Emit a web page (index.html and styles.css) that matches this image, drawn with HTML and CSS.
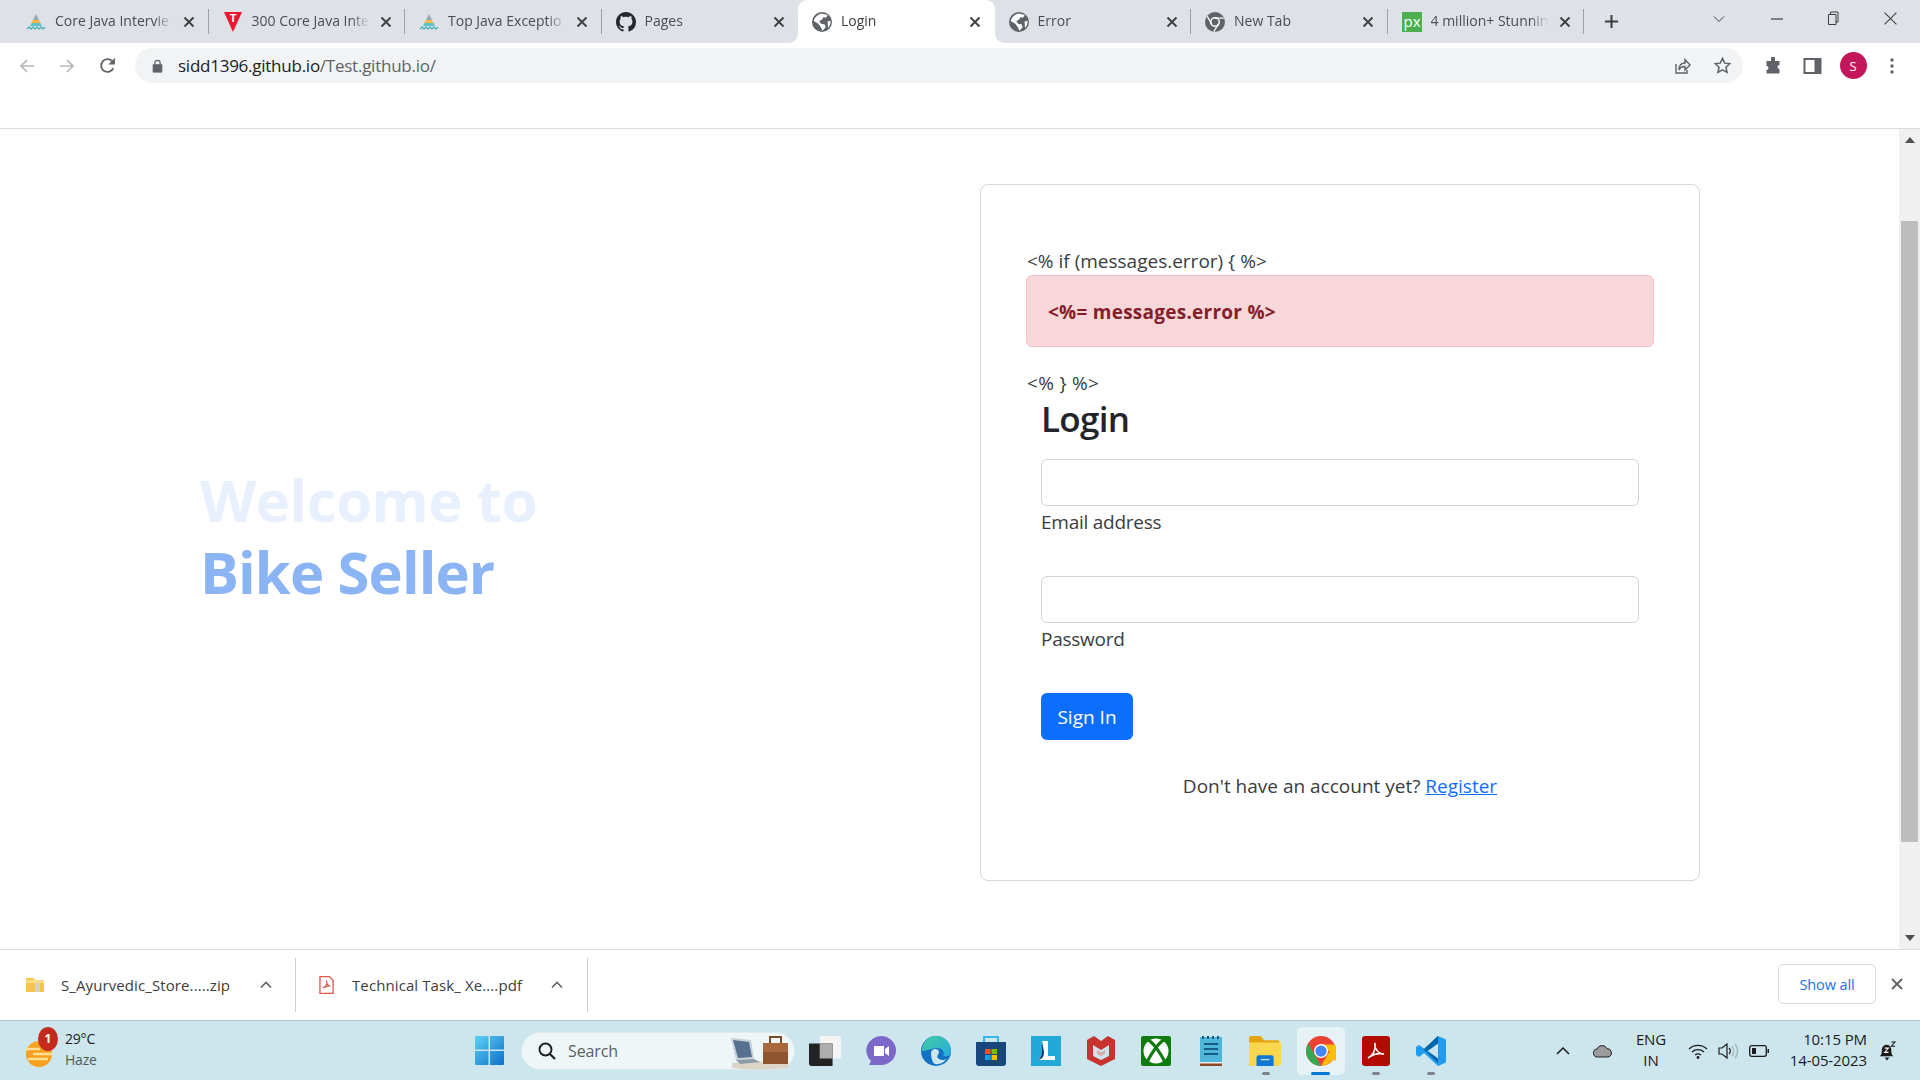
FILE: index.html
```html
<!DOCTYPE html>
<html lang="en">
<head>
<meta charset="utf-8">
<title>Login</title>
<link rel="stylesheet" href="styles.css">
</head>
<body>
<svg class="defs" width="0" height="0" aria-hidden="true">
  <defs>
    <symbol id="i-x" viewBox="0 0 12 12"><path d="M1.500 1.500l9 9M10.500 1.500l-9 9" fill="none" stroke="#3c4043" stroke-width="1.900"/></symbol>
    <symbol id="i-globe" viewBox="0 0 16 16"><circle cx="8" cy="8" r="8" fill="#5f6368"/><path d="M8 1.200c1.600.6 3 .2 4.600 1.600L11 4.600 9.400 4 8 6 5.800 7.400 7.600 9.600 10 9.800 11 12l-2.600 3L7 12 5 9.400 1.400 7.200C2 4.400 4.600 1.600 8 1.200zM12.500 7.500l2.300-.6c.3 2.400-.6 4.400-2 5.800z" fill="#fff"/></symbol>
    <symbol id="i-mount" viewBox="0 0 20 20"><path d="M10 2l3 6H7z" fill="#9aa7b0"/><path d="M7 8h3v3H5.500zM10 8h3l1.500 3H10z" fill="#f5b942"/><path d="M5.500 11H10v3H4zM10 11h4.500l1.500 3h-6z" fill="#5cc3c9"/><path d="M1 17l2-2 2 2 2-2 2 2 2-2 2 2 2-2 2 2 2-2" fill="none" stroke="#4db3bb" stroke-width="1.300"/></symbol>
  </defs>
</svg>
<div class="browser">
  <header class="tabstrip">
    <div class="tab"><svg class="fav" viewBox="0 0 20 20"><use href="#i-mount"/></svg><span class="tab-title">Core Java Intervie</span><svg class="tab-x" viewBox="0 0 12 12"><use href="#i-x"/></svg></div>
    <div class="tab"><svg class="fav" viewBox="0 0 20 20"><path d="M1 0h18l-9 20z" fill="#f0142f"/><text x="10" y="10" class="fav-t">T</text></svg><span class="tab-title">300 Core Java Inte</span><svg class="tab-x" viewBox="0 0 12 12"><use href="#i-x"/></svg></div>
    <div class="tab"><svg class="fav" viewBox="0 0 20 20"><use href="#i-mount"/></svg><span class="tab-title">Top Java Exceptio</span><svg class="tab-x" viewBox="0 0 12 12"><use href="#i-x"/></svg></div>
    <div class="tab tab-nosep"><svg class="fav" viewBox="0 0 16 16"><path fill="#24292f" d="M8 0C3.58 0 0 3.58 0 8c0 3.54 2.29 6.53 5.47 7.59.4.07.55-.17.55-.38 0-.19-.01-.82-.01-1.49-2.01.37-2.53-.49-2.69-.94-.09-.23-.48-.94-.82-1.13-.28-.15-.68-.52-.01-.53.63-.01 1.08.58 1.23.82.72 1.21 1.87.87 2.33.66.07-.52.28-.87.51-1.07-1.78-.2-3.64-.89-3.64-3.95 0-.87.31-1.59.82-2.15-.08-.2-.36-1.02.08-2.12 0 0 .67-.21 2.2.82.64-.18 1.32-.27 2-.27.68 0 1.36.09 2 .27 1.53-1.04 2.2-.82 2.2-.82.44 1.1.16 1.92.08 2.12.51.56.82 1.27.82 2.15 0 3.07-1.87 3.75-3.65 3.95.29.25.54.73.54 1.48 0 1.07-.01 1.93-.01 2.2 0 .21.15.46.55.38A8.013 8.013 0 0016 8c0-4.42-3.58-8-8-8z"/></svg><span class="tab-title">Pages</span><svg class="tab-x" viewBox="0 0 12 12"><use href="#i-x"/></svg></div>
    <div class="tab tab-active"><svg class="fav" viewBox="0 0 16 16"><use href="#i-globe"/></svg><span class="tab-title">Login</span><svg class="tab-x" viewBox="0 0 12 12"><use href="#i-x"/></svg></div>
    <div class="tab"><svg class="fav" viewBox="0 0 16 16"><use href="#i-globe"/></svg><span class="tab-title">Error</span><svg class="tab-x" viewBox="0 0 12 12"><use href="#i-x"/></svg></div>
    <div class="tab"><svg class="fav" viewBox="0 0 16 16"><circle cx="8" cy="8" r="8" fill="#5f6368"/><circle cx="8" cy="8" r="4" fill="#fff"/><circle cx="8" cy="8" r="2.800" fill="#5f6368"/><path d="M8 4.800h7M5.300 9.500L1.800 3.500M10.700 9.500L7 15.800" stroke="#fff" stroke-width="1"/></svg><span class="tab-title">New Tab</span><svg class="tab-x" viewBox="0 0 12 12"><use href="#i-x"/></svg></div>
    <div class="tab"><svg class="fav" viewBox="0 0 20 20"><rect width="20" height="20" fill="#4caf50"/><text x="10" y="15" class="fav-px-t">px</text></svg><span class="tab-title">4 million+ Stunnin</span><svg class="tab-x" viewBox="0 0 12 12"><use href="#i-x"/></svg></div>
    <svg class="newtab" viewBox="0 0 16 16"><path d="M8 1v14M1 8h14" stroke="#3c4043" stroke-width="2.200"/></svg>
    <div class="winctl">
      <svg class="wc wc-chev" viewBox="0 0 12 12"><path d="M1 3.500l5 5 5-5" fill="none" stroke="#3c4043" stroke-width="1"/></svg>
      <svg class="wc wc-min" viewBox="0 0 12 12"><path d="M0 6h12" stroke="#3c4043" stroke-width="1.200"/></svg>
      <svg class="wc wc-max" viewBox="0 0 12 14"><path d="M1.500 3.500h7.500v10H1.500zM3.500 3.500V1h7.500v10H9" fill="none" stroke="#3c4043" stroke-width="1"/></svg>
      <svg class="wc wc-close" viewBox="0 0 12 12"><path d="M.5.5l11 11M11.500.5l-11 11" stroke="#3c4043" stroke-width="1"/></svg>
    </div>
  </header>

  <nav class="toolbar">
    <svg class="tb tb-back" viewBox="0 0 16 16"><path d="M15 8H2M8 2L2 8l6 6" fill="none" stroke="#b4b6b9" stroke-width="1.700"/></svg>
    <svg class="tb tb-fwd" viewBox="0 0 16 16"><path d="M1 8h13M8 2l6 6-6 6" fill="none" stroke="#b4b6b9" stroke-width="1.700"/></svg>
    <svg class="tb tb-reload" viewBox="0 0 16 16"><path d="M13.500 10.500A6 6 0 1 1 12.300 3.800L14.500 6" fill="none" stroke="#5f6368" stroke-width="1.700"/><path d="M15 .8V7H8.800z" fill="#5f6368"/></svg>
    <div class="omnibox">
      <svg class="lock" viewBox="0 0 12 16"><path d="M1 6.500h10V15H1z" fill="#5f6368" stroke="#5f6368"/><path d="M3 6.500V4.500a3 3 0 0 1 6 0v2" fill="none" stroke="#5f6368" stroke-width="1.400"/></svg>
      <span class="url"><span class="url-host">sidd1396.github.io</span>/Test.github.io/</span>
      <svg class="tb tb-share" viewBox="0 0 18 18"><path d="M3 7v9h11v-3" fill="none" stroke="#5f6368" stroke-width="1.400"/><path d="M6 13c0-5 3-7 6-7V2.500L17 8l-5 5V9.500c-3 0-5 1-6 3.500z" fill="none" stroke="#5f6368" stroke-width="1.400"/></svg>
      <svg class="tb tb-star" viewBox="0 0 18 18"><path d="M9 1.500l2.300 5 5.400.600-4 3.700 1.100 5.400L9 13.500l-4.800 2.700 1.100-5.400-4-3.700 5.400-.600z" fill="none" stroke="#5f6368" stroke-width="1.600"/></svg>
    </div>
    <svg class="tb tb-puzzle" viewBox="0 0 18 18"><path d="M7 1.500a2 2 0 0 1 4 0V4h4.500v4a2 2 0 0 0 0 4v4.500H2.500V13a2 2 0 0 0 0-4V4H7z" fill="#5f6368"/></svg>
    <svg class="tb tb-side" viewBox="0 0 18 18"><path d="M1 2h16v14H1z" fill="none" stroke="#5f6368" stroke-width="2"/><path d="M11 2h6v14h-6z" fill="#5f6368"/></svg>
    <div class="avatar">S</div>
    <svg class="tb tb-menu" viewBox="0 0 4 18"><circle cx="2" cy="3" r="1.700" fill="#5f6368"/><circle cx="2" cy="9" r="1.700" fill="#5f6368"/><circle cx="2" cy="15" r="1.700" fill="#5f6368"/></svg>
  </nav>

  <div class="topnav"></div>

  <main class="viewport">
    <div class="page">
      <section class="hero">
        <h1 class="hero-title"><span class="hero-a">Welcome to</span><span class="hero-b">Bike Seller</span></h1>
      </section>
      <section class="card">
        <div class="tpl tpl-if">&lt;% if (messages.error) { %&gt;</div>
        <div class="alert">&lt;%= messages.error %&gt;</div>
        <div class="tpl tpl-end">&lt;% } %&gt;</div>
        <form class="form">
          <h2 class="form-title">Login</h2>
          <div class="input"></div>
          <label class="label">Email address</label>
          <div class="input input-2"></div>
          <label class="label">Password</label>
          <div class="btn">Sign In</div>
          <p class="reg">Don't have an account yet? <a href="#" class="reg-link">Register</a></p>
        </form>
      </section>
    </div>
    <aside class="scrollbar">
      <svg class="sb-arrow" viewBox="0 0 10 6"><path d="M5 0l5 6H0z" fill="#505050"/></svg>
      <div class="sb-track"><div class="sb-thumb"></div></div>
      <svg class="sb-arrow" viewBox="0 0 10 6"><path d="M0 0h10L5 6z" fill="#505050"/></svg>
    </aside>
  </main>

  <footer class="shelf">
    <div class="dl dl-1">
      <svg class="dl-icon" viewBox="0 0 18 16"><path d="M0 1h7l2 2h9v12H0z" fill="#f6c544"/><path d="M0 3h18v3H0z" fill="#f9dc84"/><path d="M9 6h5v9H9z" fill="#d6d2c4"/></svg>
      <span class="dl-name">S_Ayurvedic_Store.....zip</span>
      <svg class="dl-chev" viewBox="0 0 12 8"><path d="M1 6.500l5-5 5 5" fill="none" stroke="#5f6368" stroke-width="1.600"/></svg>
    </div>
    <div class="dl dl-2">
      <svg class="dl-icon dl-pdf" viewBox="0 0 16 20"><path d="M1 1h10l4 4v14H1z" fill="#fff" stroke="#e2574c" stroke-width="1.400"/><path d="M4 13c3-1 5-4 4-8 0 4 2 6 4 6-3 0-5 1-8 2z" fill="none" stroke="#e2574c" stroke-width="1.300"/></svg>
      <span class="dl-name">Technical Task_ Xe....pdf</span>
      <svg class="dl-chev" viewBox="0 0 12 8"><path d="M1 6.500l5-5 5 5" fill="none" stroke="#5f6368" stroke-width="1.600"/></svg>
    </div>
    <div class="showall">Show all</div>
    <svg class="shelf-x" viewBox="0 0 12 12"><path d="M1 1l10 10M11 1L1 11" stroke="#5f6368" stroke-width="1.900"/></svg>
  </footer>

  <div class="taskbar">
    <div class="weather">
      <div class="w-icon">
        <svg viewBox="0 0 28 30" class="w-sun"><circle cx="14" cy="16" r="13" fill="#f6a21e"/><path d="M1 11h14M8 16h19M3 21h20" stroke="#fbdf93" stroke-width="2.400"/></svg>
        <span class="w-badge">1</span>
      </div>
      <div class="w-text"><span class="w-temp">29°C</span><span class="w-cond">Haze</span></div>
    </div>
    <svg class="winlogo" viewBox="0 0 29 29"><defs><linearGradient id="wg" x1="0" y1="0" x2="1" y2="1"><stop offset="0" stop-color="#5fd2f6"/><stop offset="1" stop-color="#0a6fc8"/></linearGradient></defs><path d="M0 1a1 1 0 0 1 1-1h12.500v13.500H0zM15 0h13a1 1 0 0 1 1 1v12.500H15zM0 15h13.500v14H1a1 1 0 0 1-1-1zM15 15h14v13a1 1 0 0 1-1 1H15z" fill="url(#wg)"/></svg>
    <div class="search">
      <svg class="s-mag" viewBox="0 0 18 18"><circle cx="7.500" cy="7.500" r="6" fill="none" stroke="#1d1d1d" stroke-width="1.900"/><path d="M12 12l5 5" stroke="#1d1d1d" stroke-width="2.100"/></svg>
      <span class="s-text">Search</span>
      <svg class="s-art" viewBox="0 0 60 38"><path d="M2 31q28-3 56 0v5q-28 3-56 0z" fill="#ddd4c8"/><path d="M1 6l20 2 3 19-18 1z" fill="#c9cfd6"/><path d="M3 8l16 2 3 15-14 1z" fill="#55718f"/><path d="M6 28l18-1 6 3-20 2z" fill="#8d9aa8"/><path d="M33 11h25v21H33z" fill="#8f5430"/><path d="M33 11h25v9H33z" fill="#a9683e"/><path d="M40 11V5h11v6" fill="none" stroke="#7a4a2a" stroke-width="2"/></svg>
    </div>
    <div class="apps">
      <div class="app"><svg viewBox="0 0 30 28" class="ic"><path d="M10 0h18a2 2 0 0 1 2 2v17a2 2 0 0 1-2 2H10z" fill="#f4f4f4"/><path d="M0 7h22v21H2a2 2 0 0 1-2-2z" fill="#222"/><path d="M10 7h12v14H10z" fill="#adadad"/></svg></div>
      <div class="app"><svg viewBox="0 0 30 30" class="ic"><path d="M15 0a15 14.500 0 0 1 0 29H3l2-4A15 14.500 0 0 1 15 0z" fill="#7b68c8"/><path d="M8 10h10v10H8zM19 13l4-3v10l-4-3z" fill="#fff"/></svg></div>
      <div class="app"><svg viewBox="0 0 30 30" class="ic"><defs><linearGradient id="eg" x1="0" y1="0" x2="1" y2="1"><stop offset="0" stop-color="#3fd0a0"/><stop offset="1" stop-color="#2aa8e0"/></linearGradient></defs><circle cx="15" cy="15" r="15" fill="#1172c4"/><path d="M15 0a15 15 0 0 1 15 15c0 5-5 6-8 5 2-3 0-8-6-8-5 0-10 3-15 3C1 7 7 0 15 0z" fill="url(#eg)"/><path d="M10 17c0-4 7-6 8-1 0 3-4 4 0 7 3 2 7 1 8-1-3 5-8 7-12 6-3-1-4-8-4-11z" fill="#cde6ed"/></svg></div>
      <div class="app"><svg viewBox="0 0 30 30" class="ic"><path d="M0 6h30v21a3 3 0 0 1-3 3H3a3 3 0 0 1-3-3z" fill="#18477e"/><path d="M8 6V1h14v5" fill="none" stroke="#35b8e8" stroke-width="2"/><path d="M9 13h5.500v5H9z" fill="#f25022"/><path d="M15.500 13H21v5h-5.500z" fill="#7fba00"/><path d="M9 19h5.500v5H9z" fill="#00a4ef"/><path d="M15.500 19H21v5h-5.500z" fill="#ffb900"/></svg></div>
      <div class="app"><svg viewBox="0 0 30 30" class="ic"><rect width="30" height="30" fill="#23a9d7"/><path d="M11 5h6v15h7v4H7c2-2 4-4 4-8z" fill="#fff"/><path d="M11 5v11c0 4-2 6-4 8 4-1 6-3 6-8z" fill="#12306e"/></svg></div>
      <div class="app"><svg viewBox="0 0 28 30" class="ic"><path d="M0 4l7-4 7 5 7-5 7 4v19l-14 7-14-7z" fill="#c8322f"/><path d="M6 9l8 5 8-5v11l-8 4-8-4z" fill="#cde6ed"/><path d="M10 14l4 2.500 4-2.500v4l-4 2-4-2z" fill="#d9a9a8"/></svg></div>
      <div class="app"><svg viewBox="0 0 30 30" class="ic"><rect width="30" height="30" rx="2" fill="#107c10"/><circle cx="15" cy="15" r="12.500" fill="#fff"/><path d="M7 4c5 2 13 14 17 22M23 4C18 6 10 18 6 26" fill="none" stroke="#107c10" stroke-width="3"/></svg></div>
      <div class="app"><svg viewBox="0 0 22 30" class="ic"><path d="M0 1h22v26H0z" fill="#4fb6d8"/><path d="M0 26h22v4H0z" fill="#8a4b2a"/><path d="M0 26h22v1.500H0z" fill="#eee"/><path d="M4 8h14M4 13h14M4 18h14" stroke="#155b83" stroke-width="2"/><path d="M3 0v3M8 0v3M13 0v3M18 0v3" stroke="#155b83" stroke-width="2"/></svg></div>
      <div class="app"><svg viewBox="0 0 30 28" class="ic"><path d="M0 2a2 2 0 0 1 2-2h9l3 4h14v24H2a2 2 0 0 1-2-2z" fill="#e3a50f"/><path d="M0 6h30v20a2 2 0 0 1-2 2H2a2 2 0 0 1-2-2z" fill="#fbd64f"/><path d="M7 20a2 2 0 0 1 2-2h12a2 2 0 0 1 2 2v8H7z" fill="#0f78d4"/><path d="M11 22h8" stroke="#cde6ed" stroke-width="1.200"/></svg><i class="dot"></i></div>
      <div class="app app-on"><svg viewBox="0 0 32 32" class="ic"><circle cx="16" cy="16" r="16" fill="#ea4335"/><path d="M2.300 8L16 32a16 16 0 0 1-13.700-24z" fill="#34a853"/><path d="M16 32l8-14h7.400A16 16 0 0 1 16 32zM16 9h15a16 16 0 0 1 0 18L24 16z" fill="#fbbc05"/><circle cx="16" cy="16" r="7.500" fill="#fff"/><circle cx="16" cy="16" r="6" fill="#4285f4"/></svg><i class="dot dot-on"></i></div>
      <div class="app"><svg viewBox="0 0 28 30" class="ic"><rect width="28" height="30" rx="3" fill="#b30b00"/><path d="M6 22c5-2 8-8 7-15-1 5 3 11 9 11-5-1-11 0-16 4z" fill="none" stroke="#fff" stroke-width="1.600"/></svg><i class="dot"></i></div>
      <div class="app"><svg viewBox="0 0 30 30" class="ic"><path d="M22 0l8 3.500v23L22 30 8 17l-5 4-3-2V11l3-2 5 4z" fill="#1f9cf0"/><path d="M3 9l19 18V21L10 15 22 9V0L8 13z" fill="#0065a9"/><path d="M22 7.500v15L12 15z" fill="#cde6ed"/></svg><i class="dot"></i></div>
    </div>
    <div class="tray">
      <svg class="tr tr-up" viewBox="0 0 14 8"><path d="M1 7l6-6 6 6" fill="none" stroke="#1b1b1b" stroke-width="1.500"/></svg>
      <svg class="tr tr-cloud" viewBox="0 0 20 14"><path d="M5 13a4 4 0 0 1-1-8 5.500 5.500 0 0 1 10-.5A4.500 4.500 0 0 1 16 13z" fill="#9b9b9b" stroke="#222" stroke-width="1"/></svg>
      <div class="tr-lang"><span>ENG</span><span>IN</span></div>
      <svg class="tr tr-wifi" viewBox="0 0 20 16"><path d="M1 6a13 13 0 0 1 18 0M4 9a9 9 0 0 1 12 0M7 12a5 5 0 0 1 6 0" fill="none" stroke="#1b1b1b" stroke-width="1.300"/><circle cx="10" cy="14.500" r="1.400" fill="#1b1b1b"/></svg>
      <svg class="tr tr-vol" viewBox="0 0 20 16"><path d="M1 5h3l5-4v14l-5-4H1z" fill="none" stroke="#1b1b1b" stroke-width="1.200"/><path d="M11 5a4 4 0 0 1 0 6" fill="none" stroke="#1b1b1b" stroke-width="1.200"/><path d="M14 3a8 8 0 0 1 0 10M17 1a11 11 0 0 1 0 14" fill="none" stroke="#9fb0b5" stroke-width="1.200"/></svg>
      <svg class="tr tr-bat" viewBox="0 0 20 12"><rect x=".7" y=".7" width="16.600" height="10.600" rx="2" fill="none" stroke="#1b1b1b" stroke-width="1.300"/><rect x="3" y="3" width="4" height="6" fill="#1b1b1b"/><path d="M18.500 4h1.500v4h-1.500z" fill="#1b1b1b"/></svg>
      <div class="clock"><span>10:15 PM</span><span>14-05-2023</span></div>
      <svg class="tr tr-bell" viewBox="0 0 18 22"><path d="M1 17c2-2 2-4 2-7a5 5 0 0 1 10 0c0 3 0 5 2 7z" fill="#1b1b1b"/><path d="M6 18.500h5l-2.500 3z" fill="#1b1b1b"/><path d="M6 8.500h4l-4 4.500h4" fill="none" stroke="#fff" stroke-width="1.100"/><path d="M13 2h4l-4 4.500h4" fill="none" stroke="#1b1b1b" stroke-width="1.100"/></svg>
    </div>
  </div>
</div>
</body>
</html>
```
FILE: styles.css
```css
* { box-sizing: border-box; }
html, body { margin: 0; padding: 0; height: 100%; overflow: hidden; background: #fff; }
body { font-family: "Open Sans", "Noto Sans", sans-serif; color: #212529; }
svg { display: block; flex: none; }
.defs { position: absolute; }
.browser { width: 1920px; height: 1080px; display: flex; flex-direction: column; }

/* tab strip */
.tabstrip { height: 43px; background: #dee1e6; display: flex; align-items: stretch; padding-left: 12px; }
.tab { width: 196.5px; height: 43px; display: flex; align-items: center; padding-left: 14px; position: relative; }
.tab::after { content: ""; position: absolute; right: 0; top: 9px; height: 25px; width: 1px; background: #9da0a5; }
.tab-nosep::after, .tab-active::after { display: none; }
.tab-active { background: #fff; border-radius: 9px 9px 0 0; }
.tab-active::before { content: ""; position: absolute; left: -9px; bottom: 0; width: 9px; height: 9px; background: radial-gradient(circle at 0 0, #dee1e6 8.500px, #fff 9px); }
.tab-active .tab-title { color: #3c4043; }
.tab-active + .tab::before { content: ""; position: absolute; left: 0; bottom: 0; width: 9px; height: 9px; background: radial-gradient(circle at 100% 0, #dee1e6 8.500px, #fff 9px); }
.fav { width: 20px; height: 20px; }
.fav-t { font: 700 11px "Liberation Sans", sans-serif; fill: #fff; text-anchor: middle; }
.fav-px-t { font: 400 15px "Open Sans", sans-serif; fill: #fff; text-anchor: middle; }
.tab-title { width: 117px; margin-left: 9px; margin-top: -2px; font-size: 14px; letter-spacing: 0; color: #4a4d52; white-space: nowrap; -webkit-mask-image: linear-gradient(90deg, #000 85%, transparent 100%); mask-image: linear-gradient(90deg, #000 85%, transparent 100%); }
.tab-x { width: 12px; height: 12px; margin-left: 11px; }
.newtab { width: 15px; height: 15px; margin: 14px 0 0 20px; }
.winctl { flex: 1; position: relative; }
.wc { position: absolute; }
.wc-chev { left: 94px; top: 13px; width: 12px; height: 12px; }
.wc-min { left: 152px; top: 13px; width: 12px; height: 12px; }
.wc-max { left: 208px; top: 11px; width: 12px; height: 14px; }
.wc-close { left: 265px; top: 12px; width: 13px; height: 13px; }

/* toolbar */
.toolbar { height: 45px; display: flex; align-items: center; padding-left: 19px; background: #fff; }
.tb { width: 16px; height: 16px; }
.tb-fwd { margin-left: 24px; }
.tb-reload { margin-left: 24px; width: 17px; height: 17px; }
.omnibox { width: 1608px; height: 35px; margin-left: 19px; background: #f1f3f4; border-radius: 18px; display: flex; align-items: center; padding-left: 17px; }
.lock { width: 11px; height: 14px; }
.url { margin-left: 15px; font-size: 17px; letter-spacing: -.25px; color: #5f6368; flex: 1; }
.url-host { color: #202124; }
.tb-share { width: 18px; height: 18px; margin-right: 23px; }
.tb-star { width: 17px; height: 17px; margin-right: 12px; }
.tb-puzzle { width: 18px; height: 18px; margin-left: 21px; }
.tb-side { width: 19px; height: 18px; margin-left: 21px; }
.avatar { width: 27px; height: 27px; margin-left: 17.500px; border-radius: 50%; background: #c2185b; color: #fff; font-size: 13px; display: flex; align-items: center; justify-content: center; }
.tb-menu { width: 4px; height: 18px; margin-left: 23.500px; }

.topnav { height: 41px; background: #fff; border-bottom: 1px solid #dcdcdc; }

/* page */
.viewport { height: 820px; display: flex; }
.page { flex: 1; display: flex; align-items: flex-start; }
.hero { width: 980px; height: 820px; padding: 0 0 6px 200px; display: flex; align-items: center; }
.hero-title { margin: 0; font-size: 58px; line-height: 72px; font-weight: 700; letter-spacing: -.9px; }
.hero-a { display: block; color: #e8f0fe; letter-spacing: -.4px; }
.hero-b { display: block; color: #8ab4f4; }
.card { width: 720px; height: 697px; margin-top: 55px; border: 1px solid #d6d8da; border-radius: 8px; padding: 60px 45px 0 45px; font-size: 19px; color: #3a3d40; }
.tpl { line-height: 30px; height: 30px; padding-left: 1px; }
.tpl-if { line-height: 32px; }
.alert { height: 72px; border: 1px solid #f5c2c7; border-radius: 6px; background: #f8d7da; color: #842029; font-weight: 700; letter-spacing: .25px; padding: 21px 0 0 21px; line-height: 30px; }
.tpl-end { margin-top: 21px; letter-spacing: .3px; }
.form { padding: 0 15px 0 15px; }
.form-title { margin: -2px 0 17px; font-size: 35px; line-height: 46px; font-weight: 600; letter-spacing: -.7px; color: #212529; }
.input { height: 47px; border: 1px solid #ced4da; border-radius: 6px; background: #fff; }
.label { display: block; line-height: 30px; margin-top: 1px; letter-spacing: -.25px; }
.input-2 { margin-top: 39px; }
.btn { width: 92px; height: 47px; margin-top: 39px; background: #0d6efd; color: #fff; border-radius: 6px; display: flex; align-items: center; justify-content: center; }
.reg { margin: 31px 0 0; line-height: 30px; text-align: center; }
.reg-link { color: #0d6efd; }

/* scrollbar */
.scrollbar { width: 21px; background: #f0f0f0; display: flex; flex-direction: column; align-items: center; }
.sb-arrow { width: 10px; height: 6px; margin: 8px 0; }
.sb-track { flex: 1; width: 100%; padding-top: 70px; }
.sb-thumb { height: 621px; margin: 0 2px; background: #bdbdbd; }

/* shelf */
.shelf { height: 72px; border-top: 1px solid #dcdcdc; border-bottom: 1px solid #b8c4c8; background: #fff; display: flex; align-items: center; padding-left: 26px; }
.dl { display: flex; align-items: center; height: 54px; border-right: 1px solid #cfcfcf; }
.dl-1 { width: 270px; }
.dl-2 { width: 292px; padding-left: 23px; }
.dl-icon { width: 18px; height: 16px; }
.dl-pdf { width: 15px; height: 20px; }
.dl-name { width: 185px; margin-left: 17px; font-size: 15px; letter-spacing: .1px; color: #3c4043; white-space: nowrap; }
.dl-2 .dl-name { margin-left: 18px; }
.dl-chev { width: 12px; height: 8px; margin-left: 14px; }
.showall { width: 98px; height: 40px; margin: -2px 0 0 auto; border: 1px solid #dadce0; border-radius: 5px; color: #1a73e8; font-size: 14.500px; font-weight: 500; letter-spacing: -.1px; display: flex; align-items: center; justify-content: center; }
.shelf-x { width: 12px; height: 12px; margin: -2px 17px 0 15px; }

/* taskbar */
.taskbar { height: 59px; background: #cde6ed; display: flex; align-items: center; }
.weather { width: 475px; display: flex; align-items: center; padding-left: 25px; }
.w-icon { width: 28px; height: 30px; position: relative; margin-top: 4px; }
.w-sun { width: 28px; height: 30px; }
.w-badge { position: absolute; left: 13px; top: -11px; width: 20px; height: 24px; border-radius: 50%; background: #c42b1c; color: #fff; font-size: 12px; font-weight: 700; display: flex; align-items: center; justify-content: center; }
.w-text { margin: -3px 0 0 12px; display: flex; flex-direction: column; font-size: 14px; line-height: 21px; letter-spacing: -.2px; }
.w-temp { color: #1b1b1b; }
.w-cond { color: #505a5e; }
.winlogo { width: 29px; height: 29px; }
.search { width: 274px; height: 38px; margin-left: 17px; background: #eff6f8; border-radius: 19px; display: flex; align-items: center; padding: 0 4px 0 16px; border: 1px solid #dcebef; }
.s-mag { width: 18px; height: 18px; }
.s-text { margin-left: 12px; font-size: 16px; letter-spacing: -.1px; color: #5a5f61; flex: 1; }
.s-art { width: 60px; height: 38px; }
.apps { display: flex; margin-left: 3px; }
.app { width: 55px; height: 48px; display: flex; align-items: center; justify-content: center; position: relative; }
.app-on { background: #e6f2f6; border-radius: 5px; width: 48px; margin: 0 3.500px; }
.ic { height: 30px; width: auto; }
.dot { position: absolute; left: 50%; bottom: 0; width: 8px; height: 3px; margin-left: -4px; border-radius: 2px; background: #7b8589; }
.dot-on { width: 19px; margin-left: -9.500px; background: #0078d4; }
.tray { margin-left: auto; display: flex; align-items: center; color: #1b1b1b; }
.tr-up { width: 14px; height: 8px; margin-right: 23px; }
.tr-cloud { width: 20px; height: 14px; margin-right: 20px; }
.tr-lang, .clock { display: flex; flex-direction: column; margin-top: -2px; font-size: 15px; line-height: 21px; letter-spacing: -.1px; }
.tr-lang { align-items: center; width: 36px; margin-right: 19px; }
.tr-wifi { width: 20px; height: 16px; margin-right: 10px; }
.tr-vol { width: 20px; height: 16px; margin-right: 11px; }
.tr-bat { width: 20px; height: 12px; }
.clock { align-items: flex-end; width: 98px; }
.tr-bell { width: 17px; height: 21px; margin: 0 24px 0 12px; }
```
